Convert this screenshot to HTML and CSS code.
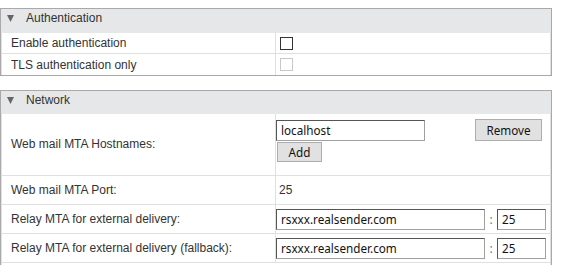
FILE: index.html
```html
<!DOCTYPE html>
<html>
<head>
<meta charset="utf-8">
<link rel="stylesheet" href="styles.css">
</head>
<body>
<section class="panel panel-auth">
  <div class="panel-head">
    <svg class="caret" width="7" height="7" viewBox="0 0 7 7"><polygon points="0,0 7,0 3.5,7" fill="#666"/></svg>
    <span>Authentication</span>
  </div>
  <div class="row row-auth">
    <div class="label">Enable authentication</div>
    <div class="value"><span class="check"></span></div>
  </div>
  <div class="row row-auth">
    <div class="label">TLS authentication only</div>
    <div class="value"><span class="check check-disabled"></span></div>
  </div>
</section>

<section class="panel panel-net">
  <div class="panel-head">
    <svg class="caret" width="7" height="7" viewBox="0 0 7 7"><polygon points="0,0 7,0 3.5,7" fill="#666"/></svg>
    <span>Network</span>
  </div>
  <div class="row row-hosts">
    <div class="label">Web mail MTA Hostnames:</div>
    <div class="value value-hosts">
      <div class="host-stack">
        <div class="field field-host">localhost</div>
        <button class="btn btn-add">Add</button>
      </div>
      <button class="btn btn-remove">Remove</button>
    </div>
  </div>
  <div class="row row-std">
    <div class="label">Web mail MTA Port:</div>
    <div class="value value-text">25</div>
  </div>
  <div class="row row-std">
    <div class="label">Relay MTA for external delivery:</div>
    <div class="value value-relay">
      <div class="field field-relay">rsxxx.realsender.com</div>
      <span class="colon">:</span>
      <div class="field field-port">25</div>
    </div>
  </div>
  <div class="row row-std">
    <div class="label">Relay MTA for external delivery (fallback):</div>
    <div class="value value-relay">
      <div class="field field-relay">rsxxx.realsender.com</div>
      <span class="colon">:</span>
      <div class="field field-port">25</div>
    </div>
  </div>
  <div class="row row-std"></div>
</section>
</body>
</html>
```

FILE: styles.css
```css
* { box-sizing: border-box; }
html, body { margin: 0; padding: 0; background: #fff; }
body {
  font-family: "Liberation Sans", Arial, sans-serif;
  font-size: 12px;
  color: #333;
}
.panel {
  width: 552px;
  border: 1px solid #a9a9a9;
  background: #fff;
}
.panel-auth { margin-top: 8px; }
.panel-net { margin-top: 14px; }
.panel-head {
  display: flex;
  align-items: flex-start;
  background: #e6e7e8;
  height: 23px;
  padding: 2px 0 0 6px;
  line-height: 15px;
  color: #333;
}
.panel-auth .panel-head { height: 24px; padding-top: 2px; }
.caret { margin: 4px 12px 0 0; flex: none; }
.row {
  display: grid;
  grid-template-columns: 274px 1fr;
  border-left: 1px solid #e0e0e0;
  border-right: 1px solid #e0e0e0;
  border-bottom: 1px solid #e0e0e0;
}
.row:last-child { border-bottom: none; }
.row-auth { height: 21px; }
.row-hosts { height: 62px; }
.row-std { height: 29px; }
.label {
  display: flex;
  align-items: center;
  padding-left: 9px;
  border-right: 1px solid #e0e0e0;
  white-space: nowrap;
}
.row-hosts .label { padding-bottom: 2px; }
.value { display: flex; align-items: center; }
.check {
  width: 13px;
  height: 13px;
  margin-left: 4px;
  border: 1px solid #333;
  background: #fff;
}
.check-disabled { border-color: #c8c8c8; }
.value-text { padding-left: 3px; }
.field, .btn {
  font-family: "Noto Sans", "Open Sans", sans-serif;
  font-size: 11.7px;
  color: #111;
}
.field {
  height: 21px;
  line-height: 19px;
  padding-left: 4px;
  border: 1px solid;
  border-color: #555 #a0a0a0 #a0a0a0 #555;
  background: #fff;
  white-space: nowrap;
}
.value-hosts {
  align-items: flex-start;
  justify-content: space-between;
  padding: 6px 8px 0 0;
}
.host-stack { display: flex; flex-direction: column; gap: 1px; }
.field-host { width: 149px; }
.btn {
  background: #e1e1e1;
  border: 1px solid #adadad;
  padding: 0;
  line-height: 18px;
}
.btn-add { width: 45px; height: 20px; margin-left: 1px; }
.btn-remove { width: 67px; height: 22px; margin-top: -1px; }
.field-relay { width: 209px; }
.colon { width: 12px; text-align: center; color: #777; font-family: "Noto Sans", sans-serif; }
.field-port { width: 49px; }
```
